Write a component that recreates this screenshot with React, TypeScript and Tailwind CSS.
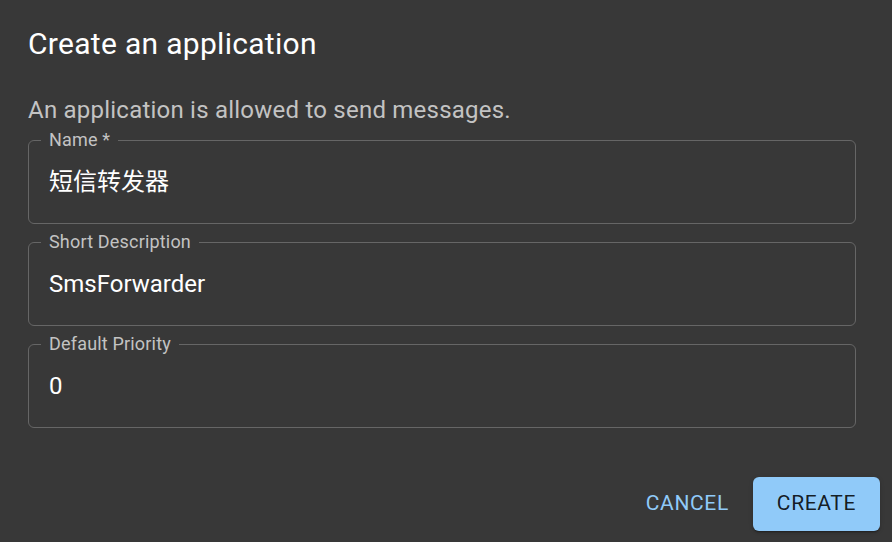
const fields = [
  { label: "Name *", value: "短信转发器" },
  { label: "Short Description", value: "SmsForwarder" },
  { label: "Default Priority", value: "0" },
];

interface FieldProps {
  label: string;
  value: string;
}

const OutlinedField: React.FC<FieldProps> = ({ label, value }) => {
  return (
    <fieldset className="h-[93px] rounded-[6px] border border-[#666666] pl-[12px] pr-[12px]">
      <legend className="px-[8px] text-[18px] leading-[18px] tracking-[0.01em] text-[#c3c3c3]">
        {label}
      </legend>
      <div className="mt-[16px] pl-[8px] text-[24px] leading-[34px] text-white">{value}</div>
    </fieldset>
  );
};

export default function App() {
  return (
    <div
      className="flex h-[542px] w-[892px] flex-col bg-[#383838] pl-[28px] pr-[12px]"
      style={{ fontFamily: "Roboto, 'Noto Sans CJK SC', sans-serif" }}
    >
      <h2 className="mt-[20px] text-[30px] font-normal leading-[48px] tracking-[0.01em] text-white">
        Create an application
      </h2>
      <p className="mt-[24px] text-[24px] leading-[36px] tracking-[0.00938em] text-[#c3c3c3]">
        An application is allowed to send messages.
      </p>
      <div className="mt-[3px] mr-[24px] flex flex-col gap-[9px]">
        {fields.map((f) => (
          <OutlinedField key={f.label} label={f.label} value={f.value} />
        ))}
      </div>
      <div className="mt-[49px] flex items-center justify-end gap-[12px]">
        <button className="h-[54px] rounded-[6px] px-[12px] text-[21px] font-normal uppercase tracking-[0.03em] text-[#90caf9]">
          Cancel
        </button>
        <button className="h-[54px] rounded-[6px] bg-[#90caf9] px-[24px] text-[21px] font-normal uppercase tracking-[0.03em] text-[rgba(0,0,0,0.87)] shadow-[0_3px_1px_-2px_rgba(0,0,0,0.2),0_2px_2px_0_rgba(0,0,0,0.14),0_1px_5px_0_rgba(0,0,0,0.12)]">
          Create
        </button>
      </div>
    </div>
  );
}
